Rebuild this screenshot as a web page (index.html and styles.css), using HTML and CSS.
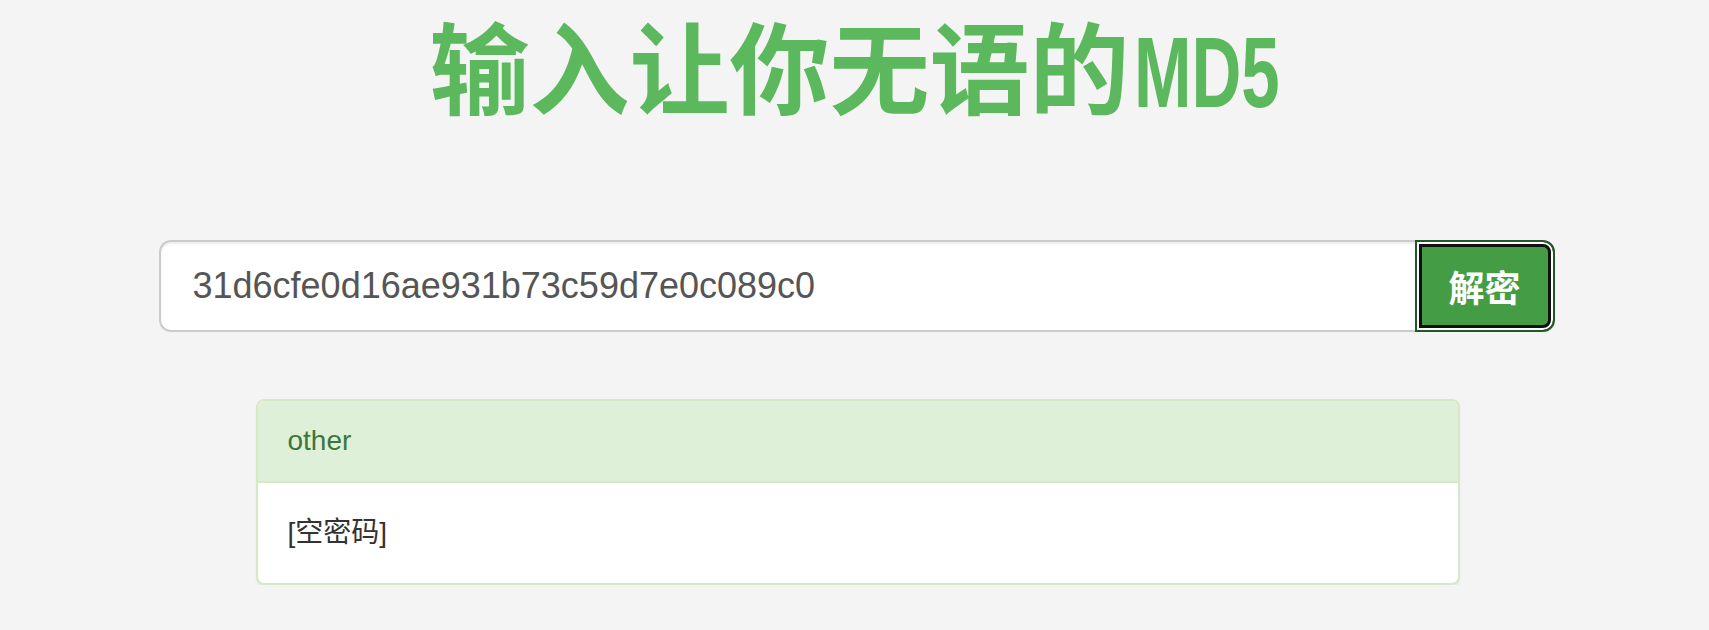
FILE: index.html
```html
<!DOCTYPE html>
<html lang="zh-CN">
<head>
<meta charset="utf-8">
<title>输入让你无语的MD5</title>
<link rel="stylesheet" href="styles.css">
</head>
<body>
  <h1 class="title">输入让你无语的<span class="latin"><span class="latin-inner">MD5</span></span></h1>
  <form class="search">
    <input class="search-input" type="text" value="31d6cfe0d16ae931b73c59d7e0c089c0">
    <button class="search-btn" type="button">解密</button>
  </form>
  <div class="panel">
    <div class="panel-heading">other</div>
    <div class="panel-body">[空密码]</div>
  </div>
</body>
</html>
```

FILE: styles.css
```css
html, body {
  margin: 0;
  padding: 0;
}
body {
  background: #f4f4f4;
  font-family: "Liberation Sans", "Noto Sans CJK SC", sans-serif;
  color: #333;
}
.title {
  margin: 14px 0 0;
  text-align: center;
  font-family: "Noto Sans CJK SC", sans-serif;
  font-weight: 700;
  font-size: 100px;
  line-height: 100px;
  color: #5cb85c;
  white-space: nowrap;
}
.latin {
  display: inline-block;
  width: 146px;
  margin-left: 4px;
  text-align: left;
  vertical-align: baseline;
}
.latin-inner {
  display: inline-block;
  font-family: "Liberation Sans", sans-serif;
  font-weight: 700;
  transform: scaleX(0.69);
  transform-origin: left center;
}
.search {
  display: flex;
  width: 1400px;
  height: 92px;
  margin: 118px auto 0;
  padding-left: 4px;
  box-sizing: border-box;
}
.search-input {
  flex: 1;
  min-width: 0;
  height: 92px;
  box-sizing: border-box;
  margin: 0;
  padding: 0 32px;
  border: 2px solid #ccc;
  border-right: 0;
  border-radius: 12px 0 0 12px;
  background: #fff;
  box-shadow: inset 0 2px 2px rgba(0, 0, 0, 0.075);
  font-family: "Liberation Sans", sans-serif;
  font-size: 36px;
  color: #555;
  outline: none;
}
.search-btn {
  width: 140px;
  height: 92px;
  box-sizing: border-box;
  margin: 0;
  padding: 0;
  border: 2px solid #255625;
  border-radius: 0 12px 12px 0;
  background: #449d44;
  box-shadow: inset 0 0 0 2px #fff, inset 0 0 0 5px #111;
  font-family: "Noto Sans CJK SC", sans-serif;
  font-weight: 700;
  font-size: 36px;
  color: #fff;
  cursor: pointer;
}
.panel {
  width: 1204px;
  margin: 67px auto 0;
  box-sizing: border-box;
  border: 2px solid #d6e9c6;
  border-radius: 8px;
  background: #fff;
  box-shadow: 0 2px 2px rgba(0, 0, 0, 0.05);
  overflow: hidden;
  position: relative;
  left: 3px;
}
.panel-heading {
  padding: 20px 30px;
  background: #dff0d8;
  border-bottom: 2px solid #d6e9c6;
  color: #3c763d;
  font-size: 28px;
  line-height: 40px;
}
.panel-body {
  padding: 30px;
  font-size: 28px;
  line-height: 40px;
  color: #333;
}
```
